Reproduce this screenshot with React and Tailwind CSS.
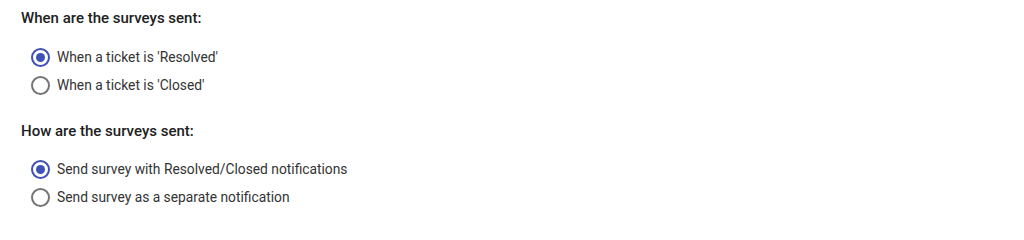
import React, { useState } from 'react';

function Radio({ checked, label, onChange }) {
  return (
    <label className="flex items-center h-[28px] pl-[10px] gap-[7px] cursor-pointer" onClick={onChange}>
      <span
        className={`flex items-center justify-center w-[19px] h-[19px] rounded-full border-2 ${
          checked ? 'border-[#3f51b5]' : 'border-[#757575]'
        }`}
      >
        {checked && <span className="w-[9px] h-[9px] rounded-full bg-[#3f51b5]" />}
      </span>
      <span className="text-[13.8px] text-[#333333]">{label}</span>
    </label>
  );
}

export default function App() {
  const [when, setWhen] = useState('resolved');
  const [how, setHow] = useState('with');

  return (
    <div className="w-[1024px] h-[221px] bg-white pl-[21px] pt-[8px] font-['Roboto',sans-serif]">
      <h3 className="text-[15px] leading-[20px] font-medium text-[#212121]">When are the surveys sent:</h3>
      <div className="mt-[15px]">
        <Radio checked={when === 'resolved'} label="When a ticket is 'Resolved'" onChange={() => setWhen('resolved')} />
        <Radio checked={when === 'closed'} label="When a ticket is 'Closed'" onChange={() => setWhen('closed')} />
      </div>

      <h3 className="mt-[22px] text-[15px] leading-[20px] font-medium text-[#212121]">How are the surveys sent:</h3>
      <div className="mt-[14px]">
        <Radio checked={how === 'with'} label="Send survey with Resolved/Closed notifications" onChange={() => setHow('with')} />
        <Radio checked={how === 'separate'} label="Send survey as a separate notification" onChange={() => setHow('separate')} />
      </div>
    </div>
  );
}
